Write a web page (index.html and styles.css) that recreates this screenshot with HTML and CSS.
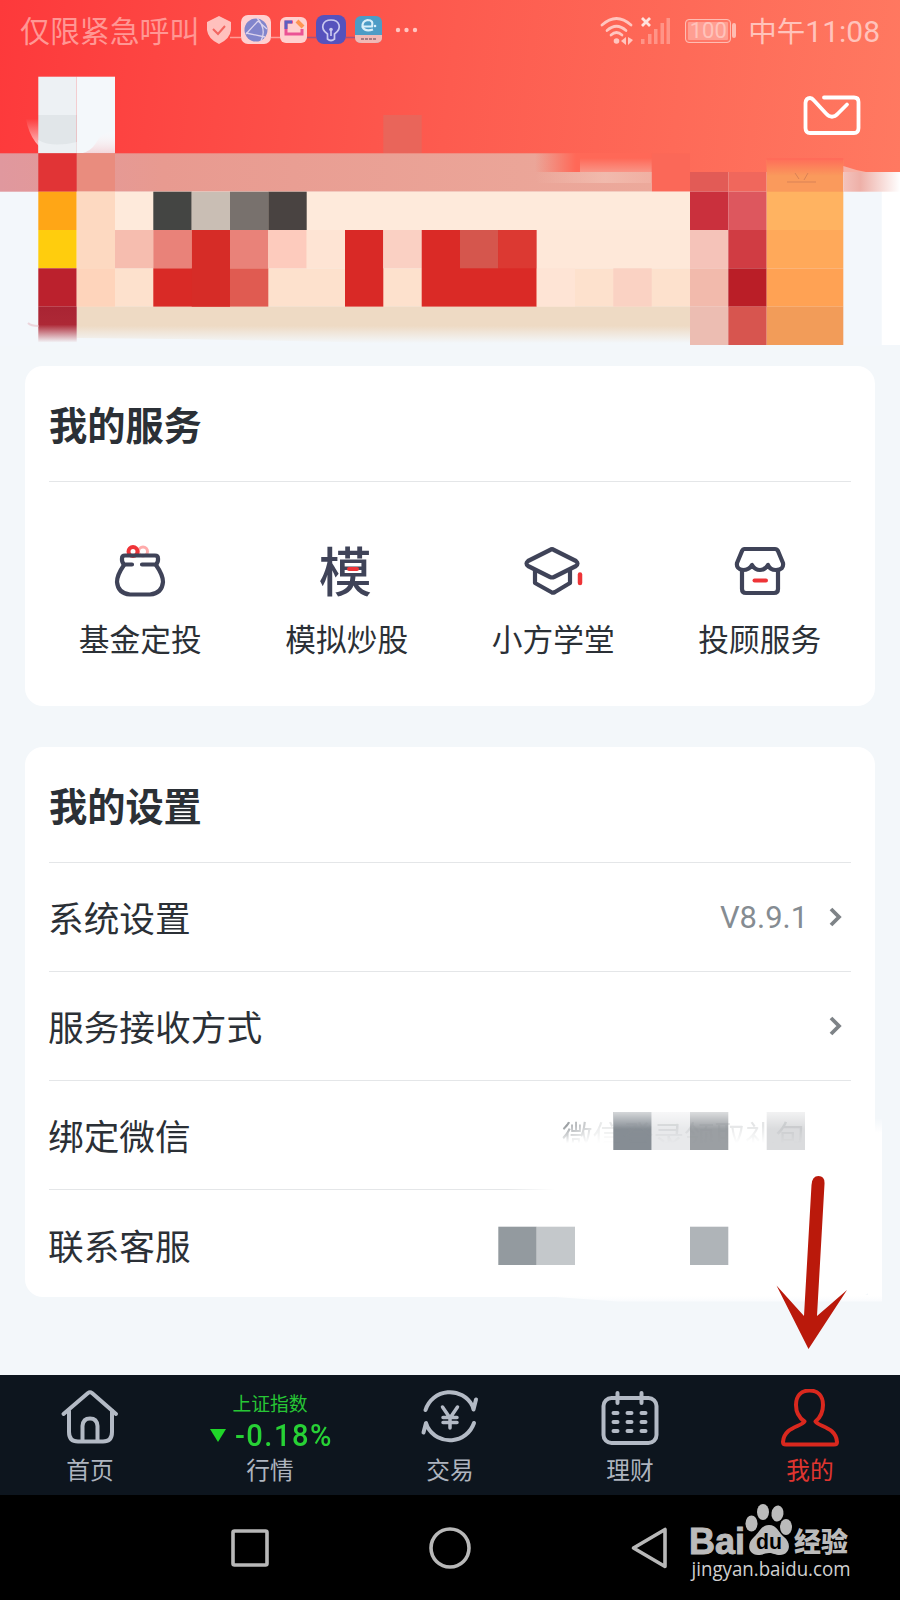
FILE: index.html
```html
<!DOCTYPE html>
<html lang="zh-CN">
<head>
  <meta charset="UTF-8" />
  <meta name="viewport" content="width=device-width, initial-scale=1" />
  <title>我的</title>
  <link rel="stylesheet" href="styles.css">
</head>
<body>
  <div class="screen">
    <header class="hero">
      <svg class="mosaic" viewBox="0 0 900 346" aria-hidden="true">
        <defs>
          <linearGradient id="band" x1="0" x2="1" y1="0" y2="0">
            <stop offset="0" stop-color="#e0989e" />
            <stop offset="0.25" stop-color="#e89a90" />
            <stop offset="1" stop-color="#eca99b" />
          </linearGradient>
          <linearGradient id="redFade" x1="0" x2="0" y1="0" y2="1">
            <stop offset="0" stop-color="#ff6b59" />
            <stop offset="1" stop-color="#ff6b59" stop-opacity="0" />
          </linearGradient>
          <linearGradient id="redWedge" x1="0" x2="1" y1="0" y2="0">
            <stop offset="0" stop-color="#ff6857" stop-opacity="0" />
            <stop offset="0.35" stop-color="#ff6857" />
            <stop offset="1" stop-color="#ff6857" />
          </linearGradient>
          <linearGradient id="paleFade" x1="0" x2="1" y1="0" y2="0">
            <stop offset="0" stop-color="#f3c2b5" stop-opacity="0" />
            <stop offset="0.6" stop-color="#f3c2b5" stop-opacity=".7" />
            <stop offset="1" stop-color="#f3b5a8" stop-opacity=".6" />
          </linearGradient>
          <linearGradient id="wedgeBottom" x1="0" x2="0" y1="0" y2="1">
            <stop offset="0" stop-color="#f6a89b" stop-opacity="0" />
            <stop offset="1" stop-color="#f6a89b" stop-opacity=".7" />
          </linearGradient>
          <linearGradient id="sandFade" x1="0" x2="0" y1="0" y2="1">
            <stop offset="0" stop-color="#eedac4" />
            <stop offset="0.5" stop-color="#eedac4" />
            <stop offset="0.95" stop-color="#f3f7fa" />
          </linearGradient>
          <linearGradient id="wineFade" x1="0" x2="0" y1="0" y2="1">
            <stop offset="0" stop-color="#a92433" />
            <stop offset="0.5" stop-color="#ad2836" />
            <stop offset="1" stop-color="#f3f7fa" />
          </linearGradient>
          <linearGradient id="cornerFade" x1="0" x2="1" y1="0" y2="0">
            <stop offset="0" stop-color="#f3c3bd" />
            <stop offset="0.3" stop-color="#eeb0a8" />
            <stop offset="1" stop-color="#ffffff" />
          </linearGradient>
          <linearGradient id="avatarFade" x1="0" x2="0" y1="0" y2="1">
            <stop offset="0" stop-color="#ffffff" stop-opacity="0" />
            <stop offset="1" stop-color="#f3d5da" />
          </linearGradient>
          <linearGradient id="ringFade" x1="0" x2="0" y1="0" y2="1">
            <stop offset="0.2" stop-color="#ffd7d7" stop-opacity="0" />
            <stop offset="1" stop-color="#ffe4e4" />
          </linearGradient>
        </defs>

        <!-- avatar -->
        <path d="M25 112 Q28 142 48 153 H39 V110 Z" fill="url(#ringFade)" />
        <rect x="38.3" y="76.7" width="38.4" height="38.3" fill="#edf1f4" />
        <rect x="76.7" y="76.7" width="38.3" height="76.6" fill="#f4f8fb" />
        <rect x="38.3" y="115" width="38.4" height="38.3" fill="#e1e6e9" />
        <path d="M38.3 140 Q52 148 76.7 142 V153.3 H38.3Z" fill="#f1f4f6" opacity=".7" />
        <path d="M115 130 Q100 133 96 143 Q91 151 82 153.3 H115Z" fill="url(#avatarFade)" />
        <rect x="383.3" y="115" width="38.4" height="38.3" fill="#e9655a" />

        <!-- lower page and blended band -->
        <rect x="0" y="191.6" width="900" height="155" fill="#f3f7fb" />
        <rect x="881.7" y="172" width="19" height="173" fill="#ffffff" />
        <rect x="0" y="153.3" width="651.7" height="38.4" fill="url(#band)" />
        <rect x="535" y="172" width="117" height="11" fill="url(#paleFade)" />
        <rect x="535" y="153" width="117" height="19" fill="url(#redWedge)" />
        <rect x="580" y="158" width="72" height="14" fill="url(#wedgeBottom)" />
        <rect x="651.7" y="153.3" width="38.3" height="38.4" fill="#fb6858" />
        <rect x="690" y="172" width="38.3" height="19.7" fill="#e25b56" />
        <rect x="728.3" y="172" width="38.4" height="19.7" fill="#f0675c" />
        <rect x="766.7" y="160" width="76.6" height="32" fill="#fa9a5c" />
        <rect x="766.7" y="158" width="76.6" height="18" fill="url(#redFade)" />
        <rect x="843.3" y="172" width="56.7" height="19.7" fill="url(#cornerFade)" />
        <path d="M843.3 166 Q855 170 866 172 H843.3Z" fill="#f7b0a4" />
        <path d="M795 173 L799 179 M808 173 L804 180 M787 182 H816" stroke="#d98256" fill="none" />
        <rect x="76.7" y="153.3" width="38.3" height="38.4" fill="#e98c7e" />
        <rect x="38.3" y="153.3" width="38.4" height="38.4" fill="#e13436" />

        <!-- banner -->
        <rect x="76.7" y="191.7" width="613.3" height="76.6" fill="#feeadb" />
        <rect x="76.7" y="268.3" width="613.3" height="38.4" fill="#fde1cd" />
        <path d="M76.7 306.6 H690 V345 H420 Q300 340 76.7 338Z" fill="url(#sandFade)" />
        <rect x="38.3" y="191.7" width="38.4" height="38.3" fill="#ffa616" />
        <rect x="38.3" y="230" width="38.4" height="38.3" fill="#ffcd0d" />
        <rect x="38.3" y="268.3" width="38.4" height="38.4" fill="#bb212d" />
        <rect x="38.3" y="306.6" width="38.4" height="36" fill="url(#wineFade)" />
        <path d="M28 323 Q31 326 38.3 326" stroke="#ecd5dc" stroke-width="2" fill="none" />
        <rect x="76.7" y="191.7" width="38.3" height="76.6" fill="#fdd9c1" />
        <rect x="76.7" y="268.3" width="38.3" height="38.4" fill="#fed4bb" />
        <rect x="153.3" y="191.7" width="38.4" height="38.3" fill="#444543" />
        <rect x="191.7" y="191.7" width="38.3" height="38.3" fill="#c9beb4" />
        <rect x="230" y="191.7" width="38.3" height="38.3" fill="#78716d" />
        <rect x="268.3" y="191.7" width="38.4" height="38.3" fill="#494341" />
        <rect x="115" y="230" width="38.3" height="38.3" fill="#f6bdaf" />
        <rect x="153.3" y="230" width="38.4" height="38.3" fill="#e98279" />
        <rect x="153.3" y="268.3" width="76.7" height="38.3" fill="#d92a26" />
        <rect x="191.7" y="230" width="38.3" height="76.6" fill="#d62c27" />
        <rect x="230" y="230" width="38.3" height="38.3" fill="#e98279" />
        <rect x="268.3" y="230" width="38.4" height="38.3" fill="#fdcbbd" />
        <rect x="306.7" y="230" width="38.3" height="38.3" fill="#fee4d4" />
        <rect x="230" y="268.3" width="38.3" height="38.3" fill="#e05b51" />
        <rect x="345" y="230" width="38.3" height="76.6" fill="#d92926" />
        <rect x="383.3" y="230" width="38.4" height="38.3" fill="#fad0c3" />
        <rect x="421.7" y="230" width="115" height="76.6" fill="#da2a26" />
        <rect x="460" y="230" width="38.3" height="38.3" fill="#d5564d" />
        <rect x="498.3" y="230" width="38.4" height="38.3" fill="#dc3932" />
        <rect x="536.7" y="230" width="153.3" height="38.3" fill="#fee8d9" />
        <rect x="536.7" y="268.3" width="38.3" height="38.3" fill="#fee4d5" />
        <rect x="613.3" y="268.3" width="38.4" height="38.3" fill="#fad2c3" />
        <rect x="690" y="191.7" width="38.3" height="38.3" fill="#ca303d" />
        <rect x="690" y="230" width="38.3" height="38.3" fill="#f5c3b9" />
        <rect x="690" y="268.3" width="38.3" height="38.4" fill="#f2baac" />
        <rect x="690" y="306.6" width="38.3" height="38.4" fill="#ecbdb2" />
        <rect x="728.3" y="191.7" width="38.4" height="38.3" fill="#dd575e" />
        <rect x="728.3" y="230" width="38.4" height="38.3" fill="#d03c43" />
        <rect x="728.3" y="268.3" width="38.4" height="38.4" fill="#ba1e27" />
        <rect x="728.3" y="306.6" width="38.4" height="38.4" fill="#d7554f" />
        <rect x="766.7" y="191.7" width="76.6" height="38.3" fill="#ffb361" />
        <rect x="766.7" y="230" width="76.6" height="38.3" fill="#ffa95a" />
        <rect x="766.7" y="268.3" width="76.6" height="38.4" fill="#ffa254" />
        <rect x="766.7" y="306.6" width="76.6" height="38.4" fill="#f29c59" />
      </svg>

      <div class="status">
        <span class="carrier">仅限紧急呼叫</span>
        <svg class="status-apps" width="220" height="32" viewBox="0 0 220 32">
          <path d="M2 7 L14 1 L26 7 V15 Q25 24 14 29 Q3 24 2 15Z" fill="#ffc0bd" />
          <path d="M8 14 L13 19 L20 11" stroke="#f26560" stroke-width="2" fill="none" />
          <path d="M25 22.5 H36 M66 22.5 H75" stroke="#ff9d98" stroke-width="1.5" />
          <path d="M102 22.5 H111 M141 22.5 H150" stroke="#a4527f" stroke-width="1.5" />
          <rect x="36" y="0" width="30" height="29" rx="7" fill="#ffd0d0" />
          <circle cx="51" cy="15" r="11.5" fill="#8185cc" />
          <path d="M52 3 Q62 14 56 26 M53 6 L41 19 M41 18 L60 22 M53 6 L62 14" stroke="#dcd3ed" stroke-width="1.3" fill="none" />
          <rect x="75" y="2" width="27" height="26" rx="6" fill="#ffd0cf" />
          <path d="M88 7 H81 V19 H97 V14" stroke="#eb5395" stroke-width="3" fill="none" />
          <path d="M81 14 V7 H87" stroke="#5e60c0" stroke-width="3" fill="none" />
          <path d="M92 6 L98 12" stroke="#ff9551" stroke-width="4" />
          <rect x="111" y="0" width="30" height="29" rx="8" fill="#5652bd" />
          <path d="M122.5 19 C114 13 118 5 126 5 C134 5 138 13 129.5 19 V24 Q126 27 122.5 24Z M126 15 V21" stroke="#cac8ef" stroke-width="1.7" fill="none" />
          <circle cx="126" cy="14.5" r="1.8" fill="#cac8ef" />
          <rect x="150" y="1" width="27" height="27" rx="6" fill="#4d9cc6" />
          <path d="M150 20 H177 V23 Q177 28 170 28 H157 Q150 28 150 23Z" fill="#f1b9b6" />
          <path d="M158 11.5 H167 Q169 5 162.5 5 Q157 6 157.5 12 Q160 17 168 14.5" stroke="#d9effa" stroke-width="2.2" fill="none" />
          <circle cx="170" cy="11" r="1.3" fill="#d9effa" />
          <path d="M156 24 H171" stroke="#a77c83" stroke-width="2" stroke-dasharray="3 1" />
          <g fill="#ffc5c0">
            <circle cx="193" cy="15" r="2.2" />
            <circle cx="201.5" cy="15" r="2.2" />
            <circle cx="210" cy="15" r="2.2" />
          </g>
        </svg>
        <div class="status-right">
          <svg width="72" height="30" viewBox="0 0 72 30">
            <g fill="none" stroke="#ffc6bf" stroke-width="2.7" stroke-linecap="round">
              <path d="M3 9 Q17.5 -4 32 9" />
              <path d="M8 14.5 Q17.5 6 27 14.5" />
              <path d="M12 19 Q17.5 14 23 19" />
            </g>
            <circle cx="17.5" cy="25" r="2.8" fill="#ffc6bf" />
            <path d="M22 25 L27 21 V29Z M29 21 L34 24 L29 29Z" fill="#ffc6bf" />
            <path d="M43 2 L51 10 M51 2 L43 10" stroke="#ffe1dc" stroke-width="2.8" />
            <g fill="#ff9487">
              <rect x="42" y="23" width="3.5" height="5" />
              <rect x="49" y="18" width="3.5" height="10" />
              <rect x="55" y="13" width="3.5" height="15" />
              <rect x="61.5" y="7" width="3.5" height="21" />
              <rect x="67.5" y="2" width="3.5" height="26" />
            </g>
          </svg>
          <span class="battery">100</span>
          <span class="time">中午<b>11:08</b></span>
        </div>
      </div>

      <svg class="mail" width="58" height="42" viewBox="0 0 58 42">
        <path d="M21 3.5 H51 Q55.5 3.5 55.5 8 V34 Q55.5 39 51 39 H7 Q2.5 39 2.5 34 V9 Q3 4 7 4 Q9 4 11 6.5 L23 19.5 Q29 26 35 19.5 L44 10.5" fill="none" stroke="#fff" stroke-width="3.8" stroke-linecap="round" stroke-linejoin="round" />
      </svg>
    </header>

    <main class="content">
      <section class="card services">
        <h2>我的服务</h2>
        <div class="service-grid">
          <div class="service">
            <svg width="56" height="56" viewBox="0 0 56 56">
              <circle cx="31" cy="8.5" r="4.5" fill="none" stroke="#ffabab" stroke-width="3" />
              <circle cx="21" cy="8.5" r="4.5" fill="none" stroke="#ef3338" stroke-width="4" />
              <g fill="none" stroke="#3f4358" stroke-width="4.2" stroke-linecap="round" stroke-linejoin="round">
                <path d="M20 21.5 H12 Q9.5 19 10 15.5 Q10 12.500 13 12.500 H43 Q46 12.500 46 15.5 Q46.5 19 44 21.5 H30" />
                <path d="M12 22 Q5 32 5 39 Q6 50.5 18 51.5 H38 Q50 50.5 51 39 Q51 32 44 22" />
              </g>
            </svg>
            <span>基金定投</span>
          </div>
          <div class="service">
            <div class="glyph-icon">模</div>
            <span>模拟炒股</span>
          </div>
          <div class="service">
            <svg width="62" height="56" viewBox="0 0 62 56">
              <g fill="none" stroke="#3f4358" stroke-width="4.2" stroke-linecap="round" stroke-linejoin="round">
                <path d="M28 7 Q30 5.5 32 7 L54 18 Q57 20.5 54 23 L32 34 Q30 35 28 34 L6 23 Q3 20.5 6 18Z" />
                <path d="M13 27 V40 L30 49.5 Q31 50 33 49 L48 40 V27" />
              </g>
              <path d="M58 31.5 V40" stroke="#ee3437" stroke-width="4.5" stroke-linecap="round" />
            </svg>
            <span>小方学堂</span>
          </div>
          <div class="service">
            <svg width="56" height="56" viewBox="0 0 56 56">
              <g fill="none" stroke="#3f4358" stroke-width="4.2" stroke-linejoin="round">
                <path d="M12 6 H43 Q45 6 46 8 L51 20 Q52 27 44 27 Q38 27 36 22 Q33 27 28 27 Q23 27 20 22 Q17 27 11 27 Q4 26 5 20 L10 8 Q11 6 12 6Z" />
                <path d="M10 26 V46 Q10 50 14 50 H42 Q46 50 46 46 V26" />
              </g>
              <path d="M22.5 37.5 H34" stroke="#ee3437" stroke-width="4" stroke-linecap="round" />
            </svg>
            <span>投顾服务</span>
          </div>
        </div>
      </section>

      <section class="card settings">
        <h2>我的设置</h2>
        <div class="row">
          <span>系统设置</span>
          <span class="value">V8.9.1</span>
          <svg class="chevron" width="13" height="20" viewBox="0 0 13 20"><path d="M2 2 L10 10 L2 18" /></svg>
        </div>
        <div class="row">
          <span>服务接收方式</span>
          <svg class="chevron" width="13" height="20" viewBox="0 0 13 20"><path d="M2 2 L10 10 L2 18" /></svg>
        </div>
        <div class="row faded">
          <span>绑定微信</span>
          <span class="ghost">微信登录领取礼包</span>
        </div>
        <div class="row">
          <span>联系客服</span>
        </div>
        <svg class="redaction" width="400" height="200" viewBox="0 0 400 200" aria-hidden="true">
          <defs>
            <linearGradient id="topFade" x1="0" x2="0" y1="0" y2="1">
              <stop offset="0" stop-color="#fff" stop-opacity=".65" />
              <stop offset="0.45" stop-color="#fff" stop-opacity="0" />
            </linearGradient>
            <linearGradient id="edgeFade" x1="0" x2="0" y1="0" y2="1">
              <stop offset="0" stop-color="#fff" stop-opacity="0" />
              <stop offset="0.08" stop-color="#fff" />
              <stop offset="0.97" stop-color="#fff" />
              <stop offset="1" stop-color="#f9fbfd" />
            </linearGradient>
          </defs>
          <path d="M370 10 H384 V193.5 H120 L30 187 H370Z" fill="url(#edgeFade)" />
          <rect x="115.3" y="4" width="38.4" height="38" fill="#868d94" />
          <rect x="153.7" y="4" width="38.3" height="38" fill="#e8e9eb" />
          <rect x="192" y="4" width="38.3" height="38" fill="#9b9fa3" />
          <rect x="268.7" y="4" width="38.3" height="38" fill="#dadbdd" />
          <rect x="115.3" y="4" width="192" height="38" fill="url(#topFade)" />
          <rect x="0.3" y="118.7" width="38.4" height="38.3" fill="#939a9f" />
          <rect x="38.7" y="118.7" width="38.3" height="38.3" fill="#c4c8cb" />
          <rect x="192" y="118.7" width="38.3" height="38.3" fill="#afb4b8" />
        </svg>
      </section>
    </main>

    <nav class="tabs">
      <div class="tab">
        <svg width="60" height="60" viewBox="0 0 60 60">
          <g fill="none" stroke="#b3bac5" stroke-width="4" stroke-linecap="round" stroke-linejoin="round">
            <path d="M3.5 25 L28 4 Q30 2.5 32 4 L56 25" />
            <path d="M9 22 V43 Q9 52.5 18 52.5 H43 Q52 52.5 52 43 V22" />
            <path d="M22.5 52 V37 Q23 29.5 30 29.5 Q37 29.5 37.5 37 V52" />
          </g>
        </svg>
        <span>首页</span>
      </div>
      <div class="tab market">
        <span class="index-name">上证指数</span>
        <div class="index-change"><i></i><b>-0.18%</b></div>
        <span>行情</span>
      </div>
      <div class="tab">
        <svg width="60" height="60" viewBox="0 0 60 60">
          <g fill="none" stroke="#b3bac5" stroke-width="4" stroke-linecap="round" stroke-linejoin="round">
            <path d="M5.5 21 A25.5 25.5 0 0 1 52.5 17 L53.5 20.5 L56 10.5" />
            <path d="M54 34 A25.5 25.5 0 0 1 7.5 38 L6 34 L3.5 43.5" />
            <path d="M22.5 18 L30 29 L37.5 18 M23 28.5 H37 M23 33.5 H37 M30 29 V39" stroke-width="3.5" />
          </g>
        </svg>
        <span>交易</span>
      </div>
      <div class="tab">
        <svg width="60" height="60" viewBox="0 0 60 60">
          <g fill="none" stroke="#b3bac5" stroke-width="4" stroke-linecap="round">
            <rect x="3.5" y="9" width="53" height="45" rx="8" />
            <path d="M17.5 4 V14 M41.5 4 V14" />
            <path d="M13.5 24 H17.5 M27.5 24 H31.5 M41.5 24 H45.5 M13.5 33 H17.5 M27.5 33 H31.5 M41.5 33 H45.5 M13.5 42 H17.5 M27.5 42 H31.5 M41.5 42 H45.5" />
          </g>
        </svg>
        <span>理财</span>
      </div>
      <div class="tab active">
        <svg width="60" height="60" viewBox="0 0 60 60">
          <path d="M24.5 32.5 C18 28 16 22 16 16 C16 7 21 1.5 29.5 1.5 C38 1.5 43 7 43 16 C43 22 41 28 35.5 32.5 C39 38 56 38 57 53 Q57 55.5 54 55.5 H6 Q3 55.5 3 53 C4 38 21 38 24.5 32.5Z" fill="none" stroke="#d9281e" stroke-width="4" stroke-linejoin="round" />
        </svg>
        <span>我的</span>
      </div>
    </nav>

    <footer class="softkeys">
      <svg width="42" height="42" viewBox="0 0 42 42"><rect x="4" y="4" width="34" height="34" rx="1.5" /></svg>
      <svg width="42" height="42" viewBox="0 0 42 42"><circle cx="21" cy="21" r="19" /></svg>
      <svg width="42" height="42" viewBox="0 0 42 42"><path d="M4.5 21 L36 2.5 V39.5Z" /></svg>
    </footer>

    <svg class="arrow" width="74" height="176" viewBox="0 0 74 176" aria-hidden="true">
      <path d="M36.5 12 Q37 3 43.5 3 Q50 3 49.5 11 L42 143 L72 117 L33.5 176 L1.5 112.5 L29 143Z" fill="#ba190b" />
    </svg>

    <svg class="watermark" width="170" height="90" viewBox="0 0 170 90">
      <g fill="#bbb">
        <text x="4" y="53.5" class="wm-bold" font-size="36" textLength="56" lengthAdjust="spacingAndGlyphs" stroke="#bbb" stroke-width="1">Bai</text>
        <ellipse cx="66.5" cy="23.5" rx="6" ry="8" />
        <ellipse cx="78" cy="12" rx="6" ry="8" />
        <ellipse cx="92.5" cy="13.5" rx="6" ry="8" transform="rotate(8 92.5 13.5)" />
        <ellipse cx="101" cy="27" rx="6" ry="8" />
        <path d="M84 25 C92 25 94 33 99 37 C107 43 105 55 95 55 C90 55 88 53 84 53 C80 53 78 55 73 55 C62 54 62 43 69 37 C74 33 76 25 84 25Z" />
        <text x="109" y="51.5" class="wm-cjk" font-size="27" textLength="54" lengthAdjust="spacingAndGlyphs">经验</text>
      </g>
      <text x="71" y="49" class="wm-bold" font-size="22" fill="#000" textLength="26" lengthAdjust="spacingAndGlyphs">du</text>
      <text x="6.5" y="75.5" class="wm-url" font-size="19.5" fill="#d0d0d0" textLength="159" lengthAdjust="spacingAndGlyphs">jingyan.baidu.com</text>
    </svg>
  </div>
</body>
</html>
```
FILE: styles.css
```css
* {
  box-sizing: border-box;
}

body {
  margin: 0;
  font-family: Roboto, "Noto Sans CJK SC", sans-serif;
  color: #2b3036;
}

.screen {
  position: relative;
  width: 900px;
  height: 1600px;
  display: flex;
  flex-direction: column;
  background: #f3f7fa;
  overflow: hidden;
}

/* Header */
.hero {
  position: relative;
  height: 345px;
  background: linear-gradient(97deg, #fd393b 0, #fd5b4f 50%, #ff7961 100%) no-repeat;
  background-size: 900px 172px;
}

.mosaic {
  position: absolute;
  top: 0;
  left: 0;
  width: 900px;
  height: 346px;
}

.status {
  position: relative;
  display: flex;
  align-items: center;
  height: 62px;
  padding: 0 20px;
}

.carrier {
  font: 400 29.9px/42px "Noto Sans CJK SC", sans-serif;
  color: #ff9794;
  width: 185px;
  margin-top: -4px;
  white-space: nowrap;
}

.status-right {
  display: flex;
  align-items: center;
  margin-left: auto;
  color: #ffc3bb;
}

.battery {
  position: relative;
  width: 46px;
  height: 24px;
  margin: 0 17px 0 14px;
  border: 1.5px solid #ffbcb2;
  border-radius: 4px;
  box-shadow: inset 0 0 0 2px #ff7767;
  background: #ff9e92;
  font: 22px/21px Roboto, sans-serif;
  text-align: center;
}

.battery::after {
  content: "";
  position: absolute;
  top: 3px;
  right: -6px;
  width: 4px;
  height: 15px;
  border-radius: 2px;
  background: #ffbcb2;
}

.time {
  font: 400 28.5px/44px "Noto Sans CJK SC", sans-serif;
  white-space: nowrap;
  margin-top: -1px;
}

.time b {
  font: 400 30px/44px Roboto, sans-serif;
}

.mail {
  position: relative;
  display: block;
  margin: 32px 39px 0 auto;
}

/* Cards */
.content {
  flex: 1;
  display: flex;
  flex-direction: column;
  gap: 41px;
  padding: 21px 25px 0;
}

.card {
  position: relative;
  padding: 0 24px;
  border-radius: 18px;
  background: #fff;
}

.card h2 {
  margin: 0;
  height: 116px;
  border-bottom: 1px solid #e4e6e8;
  font: 700 38.2px/115px "Noto Sans CJK SC", sans-serif;
}

.services {
  height: 340px;
}

.service-grid {
  display: grid;
  grid-template-columns: repeat(4, 1fr);
  margin: 61px -12px 0;
}

.service {
  display: flex;
  flex-direction: column;
  align-items: center;
  gap: 16px;
  font: 400 30.7px/46px "Noto Sans CJK SC", sans-serif;
}

.glyph-icon {
  position: relative;
  height: 56px;
  margin-left: -3px;
  font: 500 53px/52px "Noto Sans CJK SC", sans-serif;
  color: #3f4358;
}

.glyph-icon::after {
  content: "";
  position: absolute;
  left: 28px;
  top: 24px;
  width: 12px;
  height: 4px;
  border-radius: 2px;
  background: #ee3437;
}

.settings {
  height: 550px;
}

.row {
  display: flex;
  align-items: center;
  height: 109px;
  border-bottom: 1px solid #e4e6e8;
  font: 400 35.7px/52px "Noto Sans CJK SC", sans-serif;
}

.row > span:first-child {
  margin-left: -1px;
}

.row:nth-of-type(4) {
  border-bottom: 0;
}

.row.faded {
  border-image: linear-gradient(90deg, #e4e6e8 57%, #fff 63%) 1;
}

.value {
  margin: 2px 21px 0 auto;
  font: 400 30.9px/46px Roboto, sans-serif;
  color: #858c92;
}

.chevron {
  margin-right: 9px;
  fill: none;
  stroke: #7e8387;
  stroke-width: 3.8;
}

.row > span:first-child + .chevron {
  margin-left: auto;
}

/* Half-erased hint, drawn over the grey blocks */
.ghost {
  position: relative;
  z-index: 1;
  margin: 0 45px 0 auto;
  font-size: 30.5px;
  line-height: 46px;
  color: #8f9498;
  -webkit-mask-image: linear-gradient(90deg, #000 0, rgba(0, 0, 0, 0.2) 14%, rgba(0, 0, 0, 0.25) 100%), linear-gradient(180deg, #000 30%, transparent 68%);
  -webkit-mask-composite: source-in;
  mask-composite: intersect;
}

.redaction {
  position: absolute;
  left: 473px;
  top: 361px;
}

/* Bottom tabs */
.tabs {
  display: grid;
  grid-template-columns: repeat(5, 1fr);
  height: 120px;
  background: #0d151e;
}

.tab {
  display: flex;
  flex-direction: column;
  align-items: center;
  padding-top: 14px;
  font: 400 23.7px/36px "Noto Sans CJK SC", sans-serif;
  color: #aeb4bf;
}

.tab svg {
  margin-bottom: 2px;
}

.tab.active {
  color: #e03530;
}

.market {
  padding-top: 14px;
}

.index-name {
  font-size: 18.8px;
  line-height: 28px;
  color: #27c635;
}

.index-change {
  display: flex;
  align-items: center;
  gap: 9px;
  height: 34px;
  padding: 2px 0 0 3px;
  color: #27d135;
}

.index-change i {
  border: 8.5px solid transparent;
  border-top: 13px solid #20d629;
  border-bottom: 0;
}

.index-change b {
  font: 500 32px/34px Roboto, sans-serif;
  letter-spacing: 1.6px;
  transform: scaleX(0.91);
  transform-origin: left;
  margin-right: -10px;
}

/* System keys */
.softkeys {
  display: flex;
  justify-content: center;
  gap: 158px;
  height: 105px;
  padding-top: 32px;
  background: #000;
}

.softkeys svg {
  fill: none;
  stroke: #b8b8b8;
  stroke-width: 3.6;
  stroke-linejoin: round;
}

.arrow {
  position: absolute;
  left: 775px;
  top: 1173px;
}

.watermark {
  position: absolute;
  left: 685px;
  top: 1500px;
  overflow: visible;
}

.wm-bold {
  font-family: "Liberation Sans", sans-serif;
  font-weight: 700;
}

.wm-cjk {
  font-family: "Noto Sans CJK SC", sans-serif;
  font-weight: 900;
}

.wm-url {
  font-family: "Open Sans", sans-serif;
}
```
